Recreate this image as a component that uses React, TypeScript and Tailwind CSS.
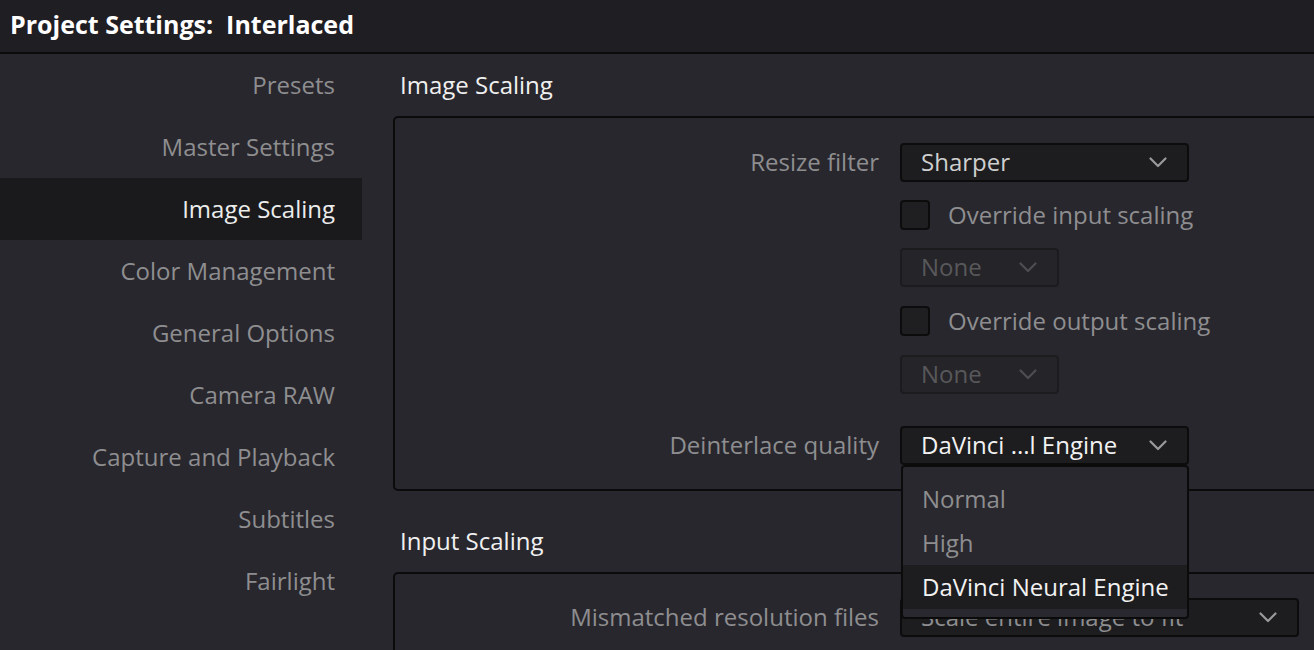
import React from "react";

const font = { fontFamily: '"Open Sans", "Noto Sans", sans-serif' };

const navItems = [
  "Presets",
  "Master Settings",
  "Image Scaling",
  "Color Management",
  "General Options",
  "Camera RAW",
  "Capture and Playback",
  "Subtitles",
  "Fairlight",
];

function Chevron({ dim }: { dim?: boolean }) {
  return (
    <svg width="18" height="11" viewBox="0 0 18 11" aria-hidden>
      <polyline
        points="1.5,1.5 9,9 16.5,1.5"
        fill="none"
        stroke={dim ? "#4e4e52" : "#9a9a9c"}
        strokeWidth="2.2"
        strokeLinecap="round"
        strokeLinejoin="round"
      />
    </svg>
  );
}

function Select({
  value,
  width,
  tone = "normal",
  disabled,
}: {
  value: string;
  width: string;
  tone?: "normal" | "bright" | "muted";
  disabled?: boolean;
}) {
  const textColor = disabled
    ? "text-[#58585b]"
    : tone === "bright"
    ? "text-[#f2f2f2]"
    : tone === "muted"
    ? "text-[#8e8e90]"
    : "text-[#cfcfcf]";
  return (
    <div
      className={`${width} h-[39px] flex items-center justify-between pl-[19px] pr-[20px] rounded-[4px] border-2 ${
        disabled ? "bg-[#252429] border-[#1c1c1f]" : "bg-[#1d1d1f] border-[#0c0c0d]"
      }`}
    >
      <span className={`text-[24px] leading-none whitespace-nowrap -mt-[1px] ${textColor}`}>{value}</span>
      <Chevron dim={disabled} />
    </div>
  );
}

function Checkbox({ label }: { label: string }) {
  return (
    <div className="flex items-center h-[30px]">
      <div className="w-[30px] h-[30px] rounded-[4px] bg-[#1f1f21] border-2 border-[#0c0c0d]" />
      <span className="ml-[18px] text-[24px] text-[#8e8e90] whitespace-nowrap">{label}</span>
    </div>
  );
}

function Label({ children }: { children: React.ReactNode }) {
  return (
    <div className="text-right text-[24px] text-[#8e8e90] whitespace-nowrap leading-none -mt-[1px]">
      {children}
    </div>
  );
}

export default function App() {
  return (
    <div style={font} className="w-[1314px] h-[650px] overflow-hidden bg-[#28272d] flex flex-col">
      <div className="h-[54px] shrink-0 bg-[#1f1e23] border-b-2 border-[#0b0b0c] flex items-center pl-[10px]">
        <h1 className="text-[25px] font-bold text-white whitespace-pre leading-none -mt-[3px]">
          Project Settings:  Interlaced
        </h1>
      </div>

      <div className="flex flex-1 min-h-0">
        <nav className="w-[362px] shrink-0 flex flex-col">
          {navItems.map((item) => (
            <div
              key={item}
              className={`h-[62px] flex items-center justify-end pr-[27px] text-[24px] whitespace-nowrap ${
                item === "Image Scaling" ? "bg-[#1a1a1c] text-[#ececec]" : "text-[#8e8e90]"
              }`}
            >
              {item}
            </div>
          ))}
        </nav>

        <main className="flex-1 pl-[31px] flex flex-col">
          <div className="h-[62px] flex items-center pl-[7px] text-[24px] text-[#f0f0f0]">
            Image Scaling
          </div>

          <section className="relative -mr-[20px] border-2 border-[#0b0b0c] rounded-[5px] pt-[25px] pb-[24px]">
            <div className="grid grid-cols-[484px_1fr] gap-x-[21px] items-center">
              <Label>Resize filter</Label>
              <Select value="Sharper" width="w-[289px]" />

              <div />
              <div className="mt-[18px]">
                <Checkbox label="Override input scaling" />
              </div>

              <div />
              <div className="mt-[18px]">
                <Select value="None" width="w-[159px]" disabled />
              </div>

              <div />
              <div className="mt-[19px]">
                <Checkbox label="Override output scaling" />
              </div>

              <div />
              <div className="mt-[19px]">
                <Select value="None" width="w-[159px]" disabled />
              </div>

              <div className="mt-[32px]">
                <Label>Deinterlace quality</Label>
              </div>
              <div className="mt-[32px] relative">
                <Select value="DaVinci ...l Engine" width="w-[289px]" tone="bright" />
                <div className="absolute z-10 left-[1px] top-[39px] w-[288px] h-[154px] bg-[#29282e] border-2 border-[#0b0b0c] rounded-[4px] pt-[10px] flex flex-col">
                  <div className="h-[44px] flex items-center pl-[19px] text-[24px] text-[#8e8e90]">Normal</div>
                  <div className="h-[44px] flex items-center pl-[19px] text-[24px] text-[#8e8e90]">High</div>
                  <div className="h-[44px] flex items-center pl-[19px] text-[24px] text-[#f2f2f2] bg-[#1d1d20] whitespace-nowrap">
                    DaVinci Neural Engine
                  </div>
                </div>
              </div>
            </div>
          </section>

          <div className="mt-[19px] h-[62px] flex items-center pl-[7px] text-[24px] text-[#f0f0f0]">
            Input Scaling
          </div>

          <section className="-mr-[20px] flex-1 border-2 border-b-0 border-[#0b0b0c] rounded-t-[5px] pt-[24px]">
            <div className="grid grid-cols-[484px_1fr] gap-x-[21px] items-center">
              <Label>Mismatched resolution files</Label>
              <Select value="Scale entire image to fit" width="w-[399px]" tone="muted" />
            </div>
          </section>
        </main>
      </div>
    </div>
  );
}
